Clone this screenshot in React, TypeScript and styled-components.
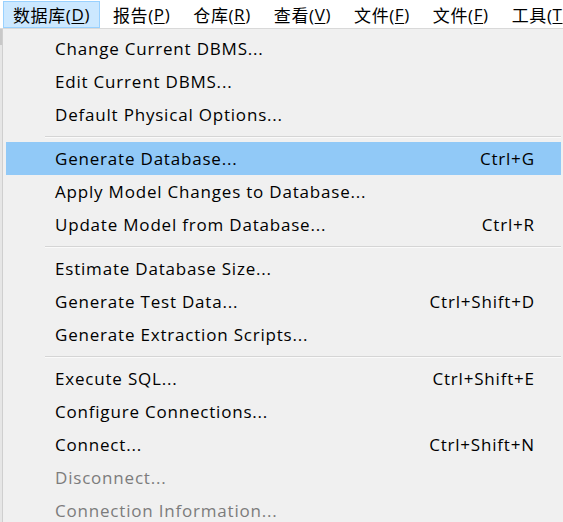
import * as React from 'react';
import styled, { createGlobalStyle } from 'styled-components';

const GlobalStyle = createGlobalStyle`
  html, body {
    margin: 0;
    padding: 0;
    background: #f0f0f0;
  }
  body {
    font-family: "Open Sans", "Noto Sans CJK SC", sans-serif;
  }
`;

const Window = styled.div`
  width: 563px;
  height: 522px;
  overflow: hidden;
  display: flex;
  flex-direction: column;
  font-family: "Open Sans", "Noto Sans CJK SC", sans-serif;
  color: #000;
`;

const MenuBar = styled.div`
  height: 29px;
  flex: none;
  background: #fff;
  border-bottom: 1px solid #d9d9d9;
  display: flex;
  align-items: flex-start;
  padding: 1px 0 0 3px;
  box-sizing: border-box;
  white-space: nowrap;
  overflow: hidden;
`;

const BarItem = styled.div<{ $active?: boolean }>`
  height: 27px;
  padding: 0 9px;
  margin-right: 3px;
  display: flex;
  align-items: center;
  font-size: 17px;
  letter-spacing: 0.6px;
  box-sizing: border-box;
  border: 1px solid ${({ $active }) => ($active ? '#99d1ff' : 'transparent')};
  background: ${({ $active }) => ($active ? '#cce8ff' : 'transparent')};
`;

const Mnemonic = styled.span`
  text-decoration: underline;
  text-underline-offset: 2px;
`;

const Body = styled.div`
  flex: 1;
  display: flex;
  min-height: 0;
`;

const Edge = styled.div`
  width: 2px;
  flex: none;
  background: linear-gradient(#c8c8c8 0 16px, #e6e6e6 16px);
`;

const Popup = styled.div`
  flex: 1;
  background: #f0f0f0;
  border-left: 1px solid #cfcfcf;
  padding: 3px 2px 0 3px;
  display: flex;
  flex-direction: column;
`;

const Item = styled.div<{ $hot?: boolean; $disabled?: boolean }>`
  height: 33px;
  flex: none;
  display: flex;
  align-items: center;
  justify-content: space-between;
  padding: 0 27px 0 49px;
  font-size: 17px;
  letter-spacing: 0.8px;
  white-space: nowrap;
  color: ${({ $disabled }) => ($disabled ? '#7c7c7c' : '#000')};
  background: ${({ $hot }) => ($hot ? '#91c9f7' : 'transparent')};
`;

const Shortcut = styled.span`
  margin-right: -0.8px;
`;

const Separator = styled.div`
  height: 11px;
  flex: none;
  display: flex;
  align-items: center;
  padding-left: 39px;

  &::after {
    content: '';
    flex: 1;
    height: 1px;
    background: #d5d5d5;
    box-shadow: 0 1px 0 #fafafa;
  }
`;

type Entry =
  | { sep: true }
  | { label: string; shortcut?: string; hot?: boolean; disabled?: boolean };

const entries: Entry[] = [
  { label: 'Change Current DBMS...' },
  { label: 'Edit Current DBMS...' },
  { label: 'Default Physical Options...' },
  { sep: true },
  { label: 'Generate Database...', shortcut: 'Ctrl+G', hot: true },
  { label: 'Apply Model Changes to Database...' },
  { label: 'Update Model from Database...', shortcut: 'Ctrl+R' },
  { sep: true },
  { label: 'Estimate Database Size...' },
  { label: 'Generate Test Data...', shortcut: 'Ctrl+Shift+D' },
  { label: 'Generate Extraction Scripts...' },
  { sep: true },
  { label: 'Execute SQL...', shortcut: 'Ctrl+Shift+E' },
  { label: 'Configure Connections...' },
  { label: 'Connect...', shortcut: 'Ctrl+Shift+N' },
  { label: 'Disconnect...', disabled: true },
  { label: 'Connection Information...', disabled: true },
];

const barItems = [
  { text: '数据库', key: 'D' },
  { text: '报告', key: 'P' },
  { text: '仓库', key: 'R' },
  { text: '查看', key: 'V' },
  { text: '文件', key: 'F' },
  { text: '文件', key: 'F' },
  { text: '工具', key: 'T' },
];

export default function App() {
  return (
    <Window>
      <GlobalStyle />
      <MenuBar>
        {barItems.map((b, i) => (
          <BarItem key={i} $active={i === 0}>
            {b.text}(<Mnemonic>{b.key}</Mnemonic>)
          </BarItem>
        ))}
      </MenuBar>
      <Body>
        <Edge />
        <Popup>
          {entries.map((e, i) =>
            'sep' in e ? (
              <Separator key={i} />
            ) : (
              <Item key={i} $hot={e.hot} $disabled={e.disabled}>
                <span>{e.label}</span>
                {e.shortcut && <Shortcut>{e.shortcut}</Shortcut>}
              </Item>
            )
          )}
        </Popup>
      </Body>
    </Window>
  );
}
